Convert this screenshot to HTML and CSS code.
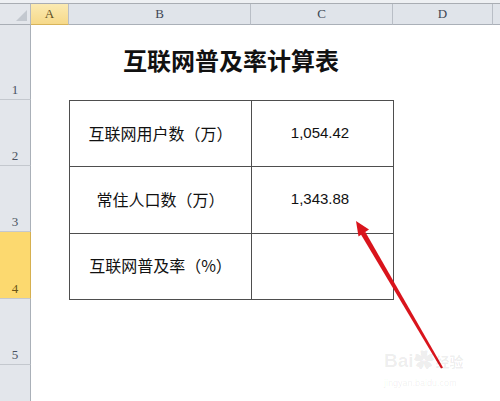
FILE: index.html
```html
<!DOCTYPE html>
<html lang="zh-CN">
<head>
    <meta charset="UTF-8">
    <meta name="viewport" content="width=device-width, initial-scale=1.0">
    <title>互联网普及率计算表</title>
    <link rel="stylesheet" href="styles.css">
</head>
<body>
    <div class="edge"></div>
    <div class="sheet">
        <div class="corner"></div>
        <div class="col-head selected">A</div>
        <div class="col-head">B</div>
        <div class="col-head">C</div>
        <div class="col-head">D</div>
        <div class="col-head last"></div>

        <div class="row-head r1">1</div>
        <div class="row-head r2">2</div>
        <div class="row-head r3">3</div>
        <div class="row-head r4 selected">4</div>
        <div class="row-head r5">5</div>
        <div class="row-head r6"></div>

        <h1 class="title">互联网普及率计算表</h1>

        <table class="calc">
            <tr>
                <td class="label">互联网用户数（万）</td>
                <td class="num">1,054.42</td>
            </tr>
            <tr>
                <td class="label">常住人口数（万）</td>
                <td class="num">1,343.88</td>
            </tr>
            <tr>
                <td class="label">互联网普及率（%）</td>
                <td class="num"></td>
            </tr>
        </table>
    </div>

    <!-- red arrow pointing at C3 -->
    <svg class="arrow" width="500" height="401" viewBox="0 0 500 401">
        <polygon points="365.2,231.7 360.8,234.3 441,368.6 443,367.4" fill="#d9141c"/>
        <polygon points="356,221 369,229.5 358.5,236.5" fill="#d9141c"/>
    </svg>

    <div class="watermark">
        <div class="wm-logo">Bai<span class="paw">&#10047;</span><span class="wm-cn">经验</span></div>
        <div class="wm-url">jingyan.baidu.com</div>
    </div>
</body>
</html>
```

FILE: styles.css
```css
* {
    box-sizing: border-box;
}
body {
    margin: 0;
    width: 500px;
    height: 401px;
    overflow: hidden;
    background: #fff;
    position: relative;
    font-family: "Noto Sans CJK SC", sans-serif;
}
.edge {
    height: 4px;
    background: #eef0f3;
    border-bottom: 1px solid #a9adb3;
}
.sheet {
    display: grid;
    grid-template-columns: 31px 38px 182px 142px 100px 1fr;
    grid-template-rows: 21px 75px 66px 66px 67px 66px 40px;
}
.corner {
    background: #e3e6eb;
    border-right: 1px solid #b4b9c1;
    border-bottom: 1px solid #a9aeb5;
    position: relative;
}
.corner::after {
    content: "";
    position: absolute;
    right: 3px;
    bottom: 3px;
    border-left: 11px solid transparent;
    border-bottom: 11px solid #c3c8cf;
}
.col-head {
    background: #e0e4ea;
    border-right: 1px solid #b9bec6;
    border-bottom: 1px solid #aab0b8;
    font-family: "Liberation Serif", serif;
    font-size: 13px;
    color: #3d4654;
    display: flex;
    align-items: center;
    justify-content: center;
}
.col-head.selected {
    background: linear-gradient(#fbeab2, #f6d98a);
    color: #5d4f22;
    border-bottom-color: #d8b45a;
}
.col-head.last {
    border-right: none;
}
.row-head {
    grid-column: 1;
    background: #e3e6eb;
    border-right: 1px solid #aab0b8;
    border-bottom: 1px solid #c4c8ce;
    font-family: "Liberation Serif", serif;
    font-size: 13px;
    color: #4a5260;
    display: flex;
    align-items: flex-end;
    justify-content: center;
    padding-bottom: 1px;
}
.r1 { grid-row: 2; }
.r2 { grid-row: 3; }
.r3 { grid-row: 4; }
.r4 { grid-row: 5; }
.r5 { grid-row: 6; }
.r6 { grid-row: 7; }
.row-head.selected {
    background: #fcd96f;
    color: #6b5517;
    border-right-color: #d6b04f;
}
.title {
    grid-column: 3 / 5;
    grid-row: 2;
    margin: 0;
    padding-bottom: 7px;
    font-size: 24px;
    font-weight: bold;
    color: #111;
    display: flex;
    align-items: center;
    justify-content: center;
}
.calc {
    grid-column: 3 / 5;
    grid-row: 3 / 6;
    width: 325px;
    height: 200px;
    border-collapse: collapse;
    table-layout: fixed;
}
.calc td {
    border: 1px solid #4e4e4e;
    text-align: center;
    vertical-align: middle;
    color: #111;
    padding: 0 0 2px;
}
.calc td.label {
    width: 182px;
    font-size: 16px;
}
.calc td.num {
    font-family: "Liberation Sans", Arial, sans-serif;
    font-size: 15px;
    padding-right: 5px;
}
.arrow {
    position: absolute;
    left: 0;
    top: 0;
}
.watermark {
    position: absolute;
    left: 384px;
    top: 346px;
    color: rgba(0, 0, 0, 0.08);
    font-family: "Liberation Sans", sans-serif;
}
.wm-logo {
    font-size: 19px;
    font-weight: bold;
    line-height: 30px;
    display: flex;
    align-items: center;
}
.paw {
    font-size: 20px;
}
.wm-cn {
    font-family: "Noto Sans CJK SC", sans-serif;
    font-size: 14px;
    margin-left: 2px;
}
.wm-url {
    font-size: 9px;
    margin-top: 2px;
}
```
